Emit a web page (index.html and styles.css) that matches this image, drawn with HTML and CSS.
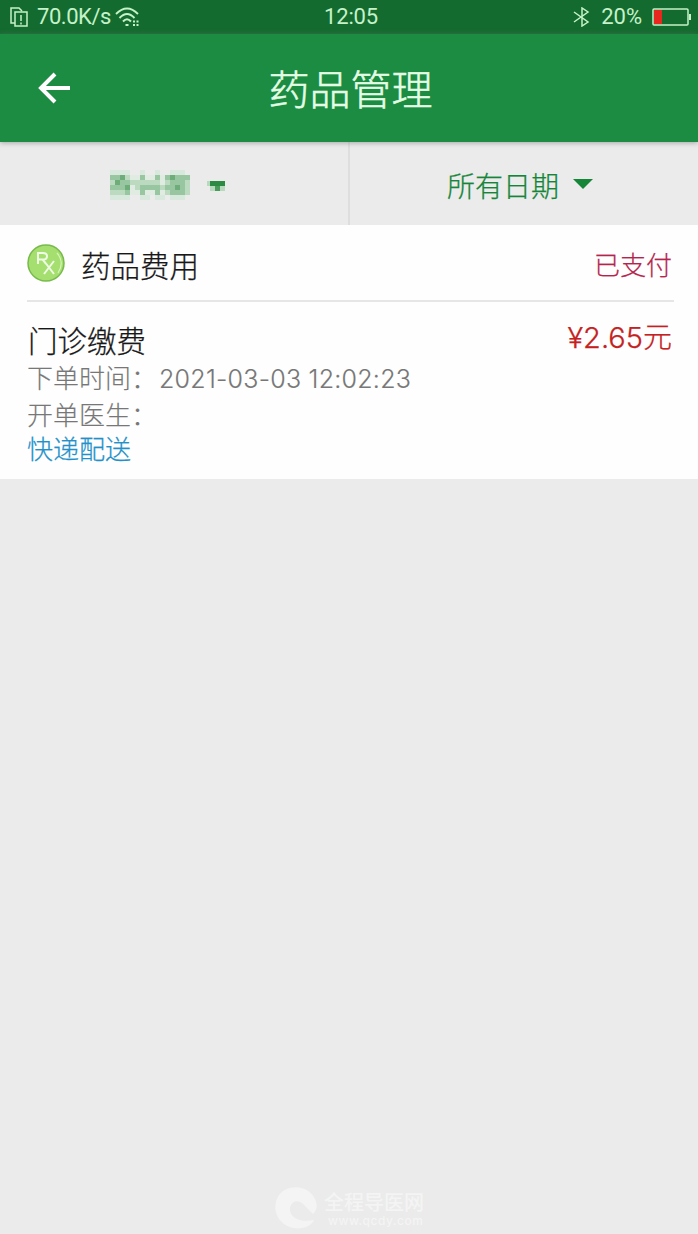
FILE: index.html
```html
<!DOCTYPE html>
<html lang="zh-CN">
<head>
<meta charset="utf-8">
<title>药品管理</title>
<link rel="stylesheet" href="styles.css">
</head>
<body>
<div class="statusbar">
  <div class="status-left">
    <svg width="19" height="22" viewBox="0 0 19 22" fill="none" stroke="currentColor" stroke-width="1.5"><path d="M5 17H1V2h8l3 3"/><path d="M5 6h12v14H5zM11 9v6M11 16.500v2"/></svg>
    <span class="speed">70.0K/s</span>
    <svg class="wifi" width="26" height="22" viewBox="0 0 26 22" fill="none" stroke="currentColor" stroke-width="1.9"><path d="M1 8Q12-3 23 8M4.500 12Q12 4 19.500 12M8 15.500Q12 11 16 15.500"/><path d="M10.500 19h3M18 15.500h2M21.500 15.500h2M18 19h2M21.500 19h2" stroke-width="2"/></svg>
  </div>
  <span class="clock">12:05</span>
  <div class="status-right">
    <svg width="18" height="20" viewBox="0 0 18 20" fill="none" stroke="currentColor" stroke-width="1.5"><path d="M1 5l14 10-6 4V1l6 4L1 15"/></svg>
    <span class="percent">20%</span>
    <svg width="40" height="18" viewBox="0 0 40 18"><rect x="1" y="1" width="35" height="16" rx="1" fill="none" stroke="currentColor" stroke-width="1.5"/><path d="M2 2h8v14H2z" fill="#e8271e"/><path d="M38 6v6" stroke="currentColor" stroke-width="2"/></svg>
  </div>
</div>
<header class="header">
  <svg class="back" width="34" height="34" viewBox="0 0 34 34" fill="none" stroke="currentColor" stroke-width="4"><path d="M18 3L4 17l14 14M4 17h29"/></svg>
  <h1 class="title">药品管理</h1>
</header>
<nav class="filters">
  <div class="filter person">
    <svg class="mosaic" width="81" height="31" viewBox="0 0 81 31" shape-rendering="crispEdges">
      <path fill="#d9e8dc" d="M0 0h20v5H0zM30 0h5v5h-5zM45 0h5v5h-5zM60 0h15v5H60zM0 25h20v5H0zM30 25h10v5H30zM45 25h10v5H45zM60 25h15v5H60z"/>
      <path fill="#bbdac0" d="M0 5h80v20H0z"/>
      <path fill="#98c6a0" d="M0 5h15v5H0zM5 10h15v5H5zM0 15h20v5H0zM15 20h5v5h-5zM30 5h5v5h-5zM45 5h5v5h-5zM30 15h20v5H30zM30 20h5v5h-5zM45 20h5v5h-5zM55 5h25v5H55zM60 10h15v5H60zM55 15h20v5H55zM60 20h15v5H60z"/>
      <path fill="#6eac79" d="M10 5h5v5h-5zM15 15h5v5h-5zM5 10h5v5H5zM65 15h5v5h-5zM60 5h5v5h-5z"/>
      <path fill="#e0ebe2" d="M20 5h10v5H20zM20 15h5v5h-5zM20 20h10v5H20zM35 5h10v5H35zM35 20h10v5H35zM50 5h5v10h-5zM50 20h5v5h-5z"/>
    </svg>
    <svg class="block-arrow" width="20" height="12" viewBox="0 0 20 12" shape-rendering="crispEdges"><path fill="#2b8b43" d="M3 1h15v5H3z"/><path fill="#4a9a5c" d="M8 6h5v5H8z"/><path fill="#b7d9bd" d="M0 1h3v5H0zM3 6h5v5H3zM13 6h5v5h-5z"/></svg>
  </div>
  <div class="filter date">
    <span class="date-label">所有日期</span>
    <svg class="arrow" width="20" height="11" viewBox="0 0 20 11"><path fill="#158538" d="M0 0h20L10 10z"/></svg>
  </div>
</nav>
<main class="card">
  <div class="card-head">
    <svg class="rx" width="38" height="38" viewBox="0 0 38 38" fill="none"><circle cx="19" cy="19" r="18" fill="#a5df70" stroke="#79ba4c" stroke-width="1.500"/><path d="M30 9q8 9 1 20" stroke="#d7f4ba" stroke-width="1.200"/><path d="M11 20V9h5q4 0 4 3.200T16 15.500h-5M15.500 15.500L19 20M17 17l10 13M27 17L17 30" stroke="#f0fbe6" stroke-width="2"/></svg>
    <span class="kind">药品费用</span>
    <span class="paid">已支付</span>
  </div>
  <div class="card-body">
    <div class="row"><span class="name">门诊缴费</span><span class="price">¥2.65<span class="yuan">元</span></span></div>
    <div class="meta"><span>下单时间：</span><span class="time">2021-03-03 12:02:23</span></div>
    <div class="meta doctor">开单医生：</div>
    <div class="delivery">快递配送</div>
  </div>
</main>
<footer class="watermark">
  <svg width="46" height="46" viewBox="0 0 46 46"><path fill="currentColor" d="M41 14C33-2 9-1 3 14c-7 17 9 32 25 29 6-1 10-4 12-8-14 3-25-3-24-12 1-7 8-9 13-4l10 10c4-4 5-9 2-15z"/></svg>
  <div class="mark-copy"><span class="mark-name">全程导医网</span><span class="mark-url">www.qcdy.com</span></div>
</footer>
</body>
</html>
```
FILE: styles.css
```css
* { box-sizing: border-box; }
body {
  margin: 0;
  width: 698px;
  height: 1234px;
  display: flex;
  flex-direction: column;
  overflow: hidden;
  background: #ebebeb;
  font-family: Inter, "Noto Sans CJK SC", sans-serif;
  font-weight: 300;
  white-space: nowrap;
}
svg { display: block; flex: none; }
.statusbar {
  height: 34px;
  flex: none;
  padding: 0 6px 0 10px;
  display: grid;
  grid-template-columns: 1fr auto 1fr;
  align-items: center;
  background: #146b30;
  color: #c5f2c8;
  font: 400 22px/32px Roboto, sans-serif;
}
.status-left, .status-right { display: flex; align-items: center; }
.status-right { justify-content: flex-end; }
.speed { margin-left: 8px; letter-spacing: -.45px; }
.wifi { margin-left: 4px; }
.clock { letter-spacing: -.2px; }
.percent { margin: 0 10px 0 10px; }
.header {
  height: 108px;
  flex: none;
  padding: 0 37px;
  display: grid;
  grid-template-columns: 34px 1fr 34px;
  align-items: center;
  background: #1c8c43;
  color: #fff;
  box-shadow: 0 1px 5px #7779;
  z-index: 1;
}
.title {
  margin: 0 0 0 3px;
  padding-top: 4px;
  text-align: center;
  color: #e4ffe6;
  font-size: 41px;
  line-height: 60px;
  font-weight: 300;
  -webkit-text-stroke: .5px currentColor;
}
.filters { height: 83px; flex: none; display: grid; grid-template-columns: 350px 1fr; }
.filter { display: flex; align-items: center; color: #158538; }
.person { padding: 4px 0 0 110px; border-right: 2px solid #dedede; }
.block-arrow { margin-left: 16px; }
.date { padding-left: 97px; gap: 14px; }
.arrow { margin-top: 2px; }
.date-label { font-size: 28px; line-height: 40px; padding-top: 6px; -webkit-text-stroke: .25px currentColor; }
.card { height: 254px; flex: none; padding: 0 24px 0 27px; background: #fefefe; -webkit-text-stroke: .25px currentColor; }
.card-head { height: 77px; display: flex; align-items: center; border-bottom: 2px solid #e6e6e6; }
.kind { margin: 6px auto 0 16px; font-size: 29.5px; line-height: 44px; color: #181818; }
.paid { margin: 6px 2px 0 0; font-size: 26px; line-height: 38px; color: #b4244d; }
.card-body { padding-top: 16px; }
.row { height: 42px; padding-right: 2px; display: flex; justify-content: space-between; align-items: center; }
.name { margin-left: 1px; font-size: 29.5px; line-height: 44px; color: #181818; padding-top: 4px; }
.price { padding-bottom: 2px; font-size: 29px; line-height: 40px; color: #c42222; }
.yuan { font-size: 29px; }
.meta { height: 38px; display: flex; align-items: center; font-size: 26px; line-height: 38px; color: #777; -webkit-text-stroke-width: .15px; }
.time { margin-left: 2px; font-size: 25px; letter-spacing: .25px; }
.doctor { height: 36px; }
.delivery { font-size: 26px; line-height: 32px; color: #2391c9; }
.watermark { margin: auto 0 0 274px; padding-bottom: 3px; display: flex; align-items: center; gap: 4px; color: #f4f4f4; }
.mark-copy { display: flex; flex-direction: column; padding-top: 3px; font-weight: 500; }
.mark-name { font-size: 20px; line-height: 23px; }
.mark-url { padding-left: 4px; font-size: 12px; line-height: 12px; letter-spacing: .5px; }
```
